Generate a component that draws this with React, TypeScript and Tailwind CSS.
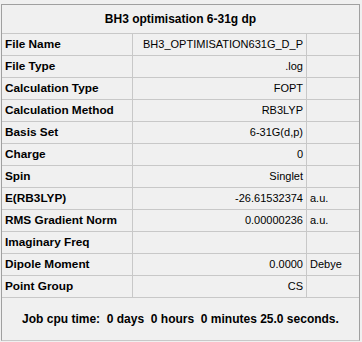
import React from 'react';

type Row = { label: string; value: string; unit?: string };

const rows: Row[] = [
  { label: 'File Name', value: 'BH3_OPTIMISATION631G_D_P' },
  { label: 'File Type', value: '.log' },
  { label: 'Calculation Type', value: 'FOPT' },
  { label: 'Calculation Method', value: 'RB3LYP' },
  { label: 'Basis Set', value: '6-31G(d,p)' },
  { label: 'Charge', value: '0' },
  { label: 'Spin', value: 'Singlet' },
  { label: 'E(RB3LYP)', value: '-26.61532374', unit: 'a.u.' },
  { label: 'RMS Gradient Norm', value: '0.00000236', unit: 'a.u.' },
  { label: 'Imaginary Freq', value: '' },
  { label: 'Dipole Moment', value: '0.0000', unit: 'Debye' },
  { label: 'Point Group', value: 'CS' },
];

const SummaryRow: React.FC<{ row: Row }> = ({ row }) => (
  <div className="grid grid-cols-[130px_1px_173px_1px_52px] h-[22px] border-b border-[#c8c8c8]">
    <div className="pl-[3px] font-bold text-[11.8px] leading-[21px] whitespace-nowrap">{row.label}</div>
    <div className="bg-[#c8c8c8]" />
    <div className="pr-[3px] text-right leading-[21px] whitespace-nowrap">{row.value}</div>
    <div className="bg-[#c8c8c8]" />
    <div className="pl-[3px] leading-[21px] whitespace-nowrap">{row.unit}</div>
  </div>
);

export default function App() {
  return (
    <div
      className="w-[362px] h-[342px] bg-[#f0f0f0] pt-[4px] pl-[1px] text-[11px] text-black"
      style={{ fontFamily: '"Liberation Sans", Arial, sans-serif' }}
    >
      <div className="w-[359px] border border-[#a0a0a0] border-b-[#c8c8c8]">
        <div className="h-[29px] border-b border-[#c8c8c8] flex items-center justify-center font-bold text-[12px]">
          BH3 optimisation 6-31g dp
        </div>
        {rows.map((r) => (
          <SummaryRow key={r.label} row={r} />
        ))}
        <div className="h-[42px] flex items-center justify-center font-bold text-[12px] whitespace-pre">
          {'Job cpu time:  0 days  0 hours  0 minutes 25.0 seconds.'}
        </div>
      </div>
    </div>
  );
}
